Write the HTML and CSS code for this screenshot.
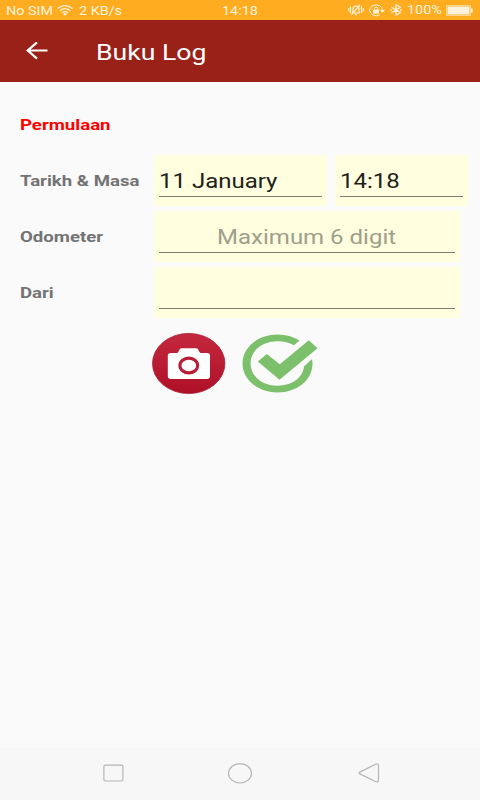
FILE: index.html
```html
<!doctype html>
<html lang="ms">
<head>
<meta charset="utf-8">
<title>Buku Log</title>
<link rel="stylesheet" href="styles.css">
</head>
<body>

<div class="status">
	<span class="wide sim">No SIM</span>
	<svg class="wifi" width="16" height="11" viewBox="0 0 16 11">
		<path d="M.5 3.6Q8-2.2 15.5 3.6M2.8 5.7Q8 1.6 13.2 5.7M5 7.7Q8 5.4 11 7.7" fill="none" stroke="currentColor" stroke-width="1.3"/>
		<path d="M6 8.8Q8 7.3 10 8.8L8 10.7z" fill="currentColor"/>
	</svg>
	<span class="wide speed">2 KB/s</span>
	<span class="wide clock">14:18</span>
	<svg class="mute" width="16" height="12" viewBox="0 0 16 12" fill="none" stroke="currentColor" stroke-width="1.2">
		<path d="M.6 4v3.500M2.500 2.500v6.500M13.500 2.500v6.500M15.400 4v3.500M4 9h8M5 8.500V5Q5 2 8 2Q11 2 11 5v3.500M7 10.700h2M3.500 10.500L12 1"/>
	</svg>
	<svg class="lock" width="16" height="13" viewBox="0 0 16 13" fill="none" stroke="currentColor">
		<path d="M11 10.7Q7.5 13 4 11Q.6 9 .6 6.3Q.6 3.2 4 1.5Q7.4.1 10.7 1.7Q13.4 3.3 13.4 6.5"/>
		<path d="M11 6h5l-2.5 2.8z" fill="currentColor" stroke="none"/>
		<path d="M4.2 5.6h5.8v4H4.2z" fill="currentColor" stroke="none"/>
		<path d="M5.4 6V4.5Q5.4 3.2 7.1 3.2Q8.8 3.2 8.8 4.5V6"/>
	</svg>
	<svg class="bluetooth" width="12" height="12" viewBox="0 0 12 12" fill="none" stroke="currentColor" stroke-width="1.3">
		<path d="M1.5 3.2L10.3 8.5L6 11.2V.8L10.3 3.3L1.5 8.8M.2 6h1.6M10.2 6h1.6"/>
	</svg>
	<span class="wide percent">100%</span>
	<svg class="battery" width="27" height="11" viewBox="0 0 27 11">
		<path d="M.5.5h24v10H.5z" fill="none" stroke="currentColor" opacity=".6"/>
		<path d="M1.500 1.500h22v8H1.500zM25 3.500h1.700v4H25z" fill="currentColor"/>
	</svg>
</div>

<div class="toolbar">
	<svg class="back" width="22" height="18" viewBox="0 0 22 18" fill="none" stroke="#fff" stroke-width="2.2">
		<path d="M21.5 8.500H1.800M11 .400L1.700 8.500L11 16.600"/>
	</svg>
	<h1 class="wide title">Buku Log</h1>
</div>

<div class="form">
	<h2 class="wide section">Permulaan</h2>
	<div class="row">
		<div class="label"><span class="wide">Tarikh &amp; Masa</span></div>
		<div class="field date"><div class="line"><span class="wide">11 January</span></div></div>
		<div class="field time"><div class="line"><span class="wide">14:18</span></div></div>
	</div>
	<div class="row">
		<div class="label"><span class="wide">Odometer</span></div>
		<div class="field full"><div class="line hint"><span class="wide">Maximum 6 digit</span></div></div>
	</div>
	<div class="row">
		<div class="label"><span class="wide">Dari</span></div>
		<div class="field full"><div class="line"></div></div>
	</div>
	<div class="actions">
		<svg width="74" height="63" viewBox="0 -.5 74 63">
			<defs>
				<linearGradient id="red" x1="0" y1="0" x2="0" y2="1">
					<stop offset="0" stop-color="#c4283f"/>
					<stop offset="1" stop-color="#ae1027"/>
				</linearGradient>
			</defs>
			<ellipse cx="36.7" cy="31" rx="36.2" ry="30.1" fill="url(#red)" stroke="#a91d32" stroke-width=".8"/>
			<path d="M19 20.5h5.5q1.5 0 2-1.5l1-2q.7-1.2 2.3-1.2h14q1.7 0 2.4 1.2l1 2q.6 1.5 2 1.5H55q3 0 3 2.7v20.2q0 3-3 3H19q-3.200 0-3.200-3V23.200q0-2.700 3.200-2.700z" fill="#fff"/>
			<ellipse cx="36.800" cy="33" rx="8.900" ry="7.400" fill="#fff" stroke="#b91c35" stroke-width="3.100"/>
		</svg>
		<svg class="check" width="76" height="60" viewBox="0 0 76 60" fill="#7cc06c">
			<path d="M57.5 6.5Q48 .5 35.5 .5C16 .5 .5 13.5 .5 29.5S16 58.5 35.5 58.5S70.5 46 70.5 29.5Q70.5 27.500 70 25L62 32.500C61 43.500 50 51.700 35.500 51.700C20 51.700 8.500 42 8.500 29.500S20 7.300 35.500 7.300Q45 7.300 52 11.200z"/>
			<path d="M15.800 27.500L24.800 20L37.800 30.300L66.800 6.200L75.500 14.200L37.500 45.700z"/>
		</svg>
	</div>
</div>

<div class="navbar">
	<svg width="22" height="18" viewBox="0 0 22 18"><rect x="1.900" y="1.200" width="19" height="15.800" rx="1.500"/></svg>
	<svg width="26" height="22" viewBox="0 0 26 22"><ellipse cx="12" cy="11.300" rx="11.500" ry="9.700"/></svg>
	<svg width="22" height="20" viewBox="0 0 22 20"><path d="M1.800 9.100L17.500 1.200Q20.500.2 20.500 2.500V17Q20.500 19.700 17.500 18.500L1.800 10.900Q.4 10 1.800 9.100z"/></svg>
</div>

</body>
</html>
```
FILE: styles.css
```css
* {
	box-sizing: border-box;
}
body {
	margin: 0;
	height: 800px;
	display: flex;
	flex-direction: column;
	background: #fafafa;
	font-family: Roboto, "Liberation Sans", sans-serif;
	overflow: hidden;
}
svg {
	display: block;
	flex: none;
}
h1, h2 {
	margin: 0;
}
.wide {
	display: block;
	width: fit-content;
	flex: none;
	white-space: nowrap;
	transform: scaleX(1.2);
	transform-origin: 0 50%;
}

.status {
	height: 20px;
	flex: none;
	display: flex;
	align-items: center;
	background: #ffac20;
	color: #fff2dc;
	font-size: 12px;
	line-height: 20px;
}
.status .sim {
	width: 51px;
	margin-left: 6px;
}
.status .speed {
	width: 143px;
	margin-left: 6px;
}
.status .clock {
	width: 126px;
}
.sim, .speed, .clock {
	padding-top: 1px;
}
.lock {
	margin-left: 5px;
}
.bluetooth {
	margin-left: 5px;
}
.status .percent {
	width: 39px;
	margin-left: 5px;
}

.toolbar {
	height: 62px;
	flex: none;
	display: flex;
	align-items: center;
	padding-left: 26px;
	background: #992117;
	color: #fff;
}
.title {
	margin-left: 48px;
	padding-top: 2px;
	font-size: 22px;
	font-weight: 400;
	transform: scaleX(1.21);
}

.form {
	flex: 1;
	padding: 33px 0 0 20px;
}
.section {
	height: 20px;
	margin-bottom: 20px;
	font-size: 15.5px;
	line-height: 20px;
	color: #f00;
}
.row {
	display: flex;
	height: 51px;
	margin-bottom: 5px;
}
.label {
	width: 134px;
	flex: none;
	padding-top: 1px;
	font-size: 15.5px;
	font-weight: 700;
	line-height: 51px;
	color: #737373;
}
.field {
	padding: 10px 5px 0;
	background: #ffffdf;
}
.date {
	width: 173px;
	margin-right: 8px;
}
.time {
	width: 133px;
}
.full {
	width: 306px;
}
.line {
	height: 32px;
	border-bottom: 1px solid #807f72;
	font-size: 20px;
	line-height: 32px;
	color: #202019;
}
.hint {
	display: flex;
	justify-content: center;
	color: #9e9e8b;
}
.hint .wide {
	transform-origin: 50% 50%;
}
.actions {
	display: flex;
	align-items: flex-start;
	padding: 9px 0 0 132px;
}
.check {
	margin: 2px 0 0 16px;
}

.navbar {
	height: 52px;
	flex: none;
	display: flex;
	align-items: center;
	justify-content: space-between;
	padding: 0 100px 2px 102px;
	background: #f7f7f7;
	fill: none;
	stroke: #b5b5b5;
	stroke-width: 1.2;
}
```
